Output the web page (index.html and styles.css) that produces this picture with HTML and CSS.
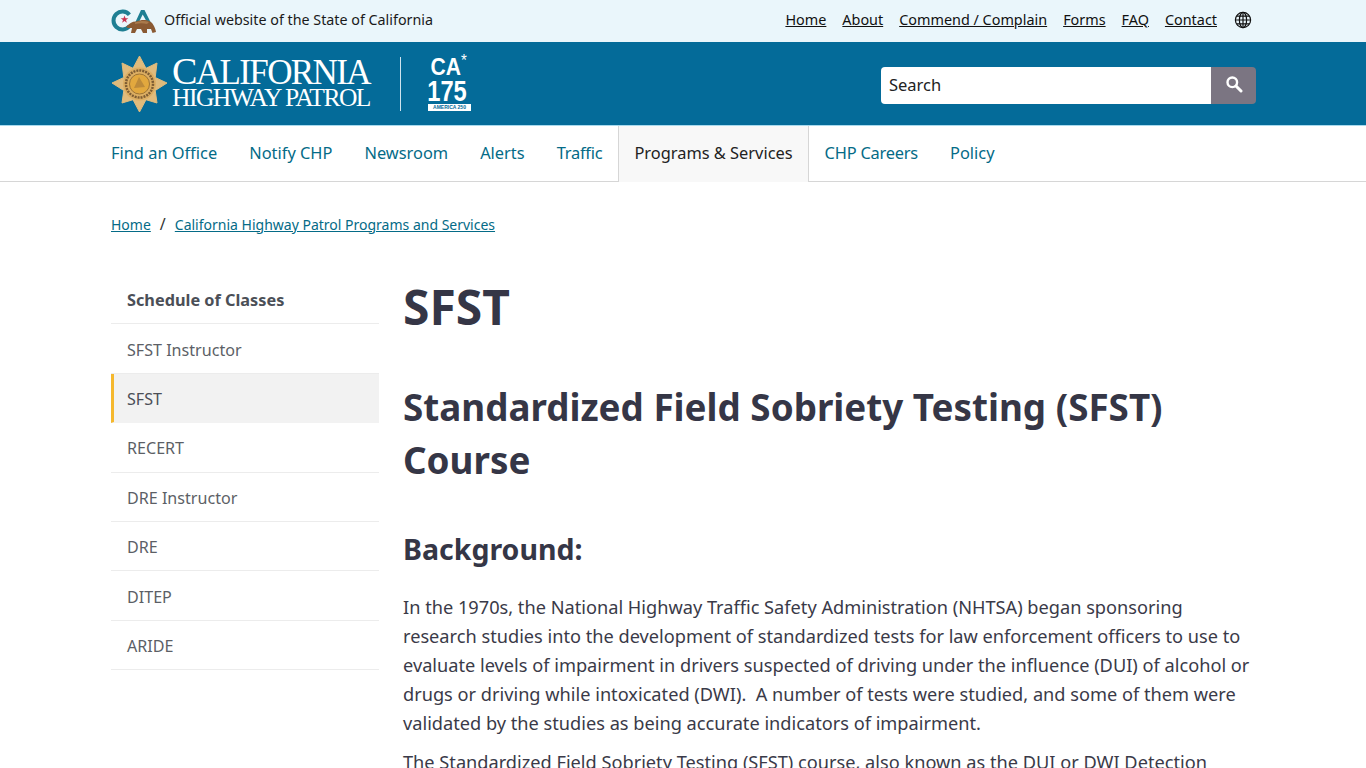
FILE: index.html
```html
<!DOCTYPE html>
<html lang="en">
<head>
<meta charset="utf-8">
<title>SFST - California Highway Patrol</title>
<link rel="stylesheet" href="styles.css">
</head>
<body>
<div class="topbar">
  <div class="container topbar-inner">
    <div class="official">
      <svg class="ca-logo" width="46" height="28" viewBox="0 0 46 28" aria-hidden="true">
        <path d="M18.400 7.700A9 9 0 1 0 18.400 19.300" fill="none" stroke="#1f7f93" stroke-width="4"/>
        <polygon points="13.500,8.500 14.500,11.200 17.300,11.200 15,13 15.900,15.700 13.500,14 11.100,15.700 12,13 9.700,11.200 12.500,11.200" fill="#c8324e"/>
        <path d="M24 16 L30 3 L33.500 3 L40 16 L36.500 16 L31.700 7.500 L27.500 16Z" fill="#1f7f93"/>
        <path d="M15 20 C18 16.500 21 14.500 25 14.500 C30 12.500 35 12.500 38 14 C41 15 44 19 45 25 L41.500 26 L40 22 L36 22 L36 26 L32 26 L30 22 L26 22 L24 26 L20 26 L21 21 L17 21Z" fill="#8a5a33"/>
        <path d="M24 15.500 C30 13.500 34 13.500 38 15 L36 17 C32 15.800 28 16 24 17Z" fill="#a97a4c"/>
      </svg>
      <span class="official-text">Official website of the State of California</span>
    </div>
    <nav class="utility">
      <a href="#">Home</a>
      <a href="#">About</a>
      <a href="#">Commend / Complain</a>
      <a href="#">Forms</a>
      <a href="#">FAQ</a>
      <a href="#">Contact</a>
      <svg class="globe" width="18" height="18" viewBox="0 0 18 18" aria-hidden="true">
        <g fill="none" stroke="#111" stroke-width="1.200">
          <circle cx="9" cy="9" r="7.600"/>
          <ellipse cx="9" cy="9" rx="3.600" ry="7.600"/>
          <path d="M9 1.400V16.600M1.400 9H16.600M2.500 5.200H15.500M2.500 12.800H15.500"/>
        </g>
      </svg>
    </nav>
  </div>
</div>
<header class="masthead">
  <div class="container masthead-inner">
    <div class="brand">
      <svg class="badge" width="57" height="56" viewBox="0 0 57 56" aria-hidden="true">
        <polygon points="28.500,0 35,12.300 46,7 44.200,21.500 56,27 44.200,34.500 46,47 35,43.700 28.500,56 22,43.700 11,47 12.800,34.500 1,27 12.800,21.500 11,7 22,12.300" fill="#e0bb7c" stroke="#e0bb7c" stroke-width="1" stroke-linejoin="round"/>
        <circle cx="28.500" cy="28" r="16.500" fill="#dcae62"/>
        <circle cx="28.500" cy="28" r="13.500" fill="none" stroke="#7d5c33" stroke-width="2.500" stroke-dasharray="2 1"/>
        <circle cx="28.500" cy="28" r="10" fill="#e2a83e" stroke="#9d7436" stroke-width="1"/>
        <path d="M23 32 L28 21 L34 31Z" fill="#bc8a3a"/>
      </svg>
      <div class="wordmark">
        <span class="wm-top">California</span>
        <span class="wm-bottom">Highway Patrol</span>
      </div>
      <div class="brand-rule"></div>
      <div class="ca175">
        <span class="ca175-ca">CA<sup>*</sup></span>
        <span class="ca175-num">175</span>
        <span class="ca175-tag">AMERICA 250</span>
      </div>
    </div>
    <form class="search">
      <div class="search-input">Search</div>
      <button class="search-btn" type="button" aria-label="Search">
        <svg width="18" height="18" viewBox="0 0 18 18" aria-hidden="true">
          <circle cx="7.300" cy="7.300" r="4.800" fill="none" stroke="#fff" stroke-width="2.400"/>
          <path d="M11 11L16 16" stroke="#fff" stroke-width="3" stroke-linecap="round"/>
        </svg>
      </button>
    </form>
  </div>
</header>
<nav class="mainnav">
  <div class="container mainnav-inner">
    <a href="#">Find an Office</a>
    <a href="#">Notify CHP</a>
    <a href="#">Newsroom</a>
    <a href="#">Alerts</a>
    <a href="#" class="tight">Traffic</a>
    <a href="#" class="current">Programs &amp; Services</a>
    <a href="#" class="tight">CHP Careers</a>
    <a href="#">Policy</a>
  </div>
</nav>
<div class="container breadcrumb">
  <a href="#">Home</a><span class="sep">/</span><a href="#">California Highway Patrol Programs and Services</a>
</div>
<div class="container layout">
  <aside class="sidenav">
    <a href="#" class="head">Schedule of Classes</a>
    <a href="#">SFST Instructor</a>
    <a href="#" class="active">SFST</a>
    <a href="#">RECERT</a>
    <a href="#">DRE Instructor</a>
    <a href="#">DRE</a>
    <a href="#">DITEP</a>
    <a href="#">ARIDE</a>
  </aside>
  <main class="content">
    <h1>SFST</h1>
    <h2>Standardized Field Sobriety Testing (SFST) Course</h2>
    <h3>Background:</h3>
    <p>In the 1970s, the National Highway Traffic Safety Administration (NHTSA) began sponsoring research studies into the development of standardized tests for law enforcement officers to use to evaluate levels of impairment in drivers suspected of driving under the influence (DUI) of alcohol or drugs or driving while intoxicated (DWI).&nbsp; A number of tests were studied, and some of them were validated by the studies as being accurate indicators of impairment.</p>
    <p>The Standardized Field Sobriety Testing (SFST) course, also known as the DUI or DWI Detection</p>
  </main>
</div>
</body>
</html>
```
FILE: styles.css
```css
* { box-sizing: border-box; }
html, body { margin: 0; padding: 0; height: 768px; overflow: hidden; }
body { font-family: "Noto Sans", "Open Sans", sans-serif; color: #3a3a48; background: #fff; }
.container { width: 1144px; margin-left: 111px; }

.topbar { height: 42px; background: #eaf6fb; }
.topbar-inner { height: 42px; display: flex; align-items: center; justify-content: space-between; }
.official { display: flex; align-items: center; gap: 7px; font-size: 14.300px; color: #1a1a1a; }
.official-text { padding-bottom: 4px; }
.ca-logo { display: block; }
.utility { display: flex; align-items: center; gap: 16px; font-size: 14.400px; padding-bottom: 2px; margin-right: 1px; }
.utility a { color: #111; padding-bottom: 2px; }
.globe { display: block; margin-right: 2px; margin-left: 1px; }

.masthead { height: 83px; background: #046b99; }
.masthead-inner { height: 83px; display: flex; align-items: center; justify-content: space-between; }
.brand { display: flex; align-items: center; color: #fff; }
.badge { display: block; margin-right: 4px; }
.wordmark { display: flex; flex-direction: column; font-family: "Liberation Serif", serif; text-transform: uppercase; width: 198px; white-space: nowrap; padding-bottom: 2px; }
.wm-top { font-size: 35px; letter-spacing: -1.600px; line-height: 29px; }
.wm-top::first-letter { font-size: 38px; }
.wm-bottom { font-size: 25.500px; letter-spacing: -1.500px; line-height: 22px; }
.brand-rule { width: 1px; height: 54px; background: #cfe3ee; margin: 0 26px 0 30px; }
.ca175 { display: flex; flex-direction: column; align-items: center; width: 45px; font-family: "Liberation Sans", sans-serif; font-weight: 700; }
.ca175-ca { font-size: 24px; line-height: 22px; transform: scaleX(0.88); margin-right: 2px; }
.ca175-ca sup { font-size: 17px; line-height: 0; font-weight: 400; }
.ca175-num { font-size: 30px; line-height: 25px; transform: scaleX(0.79); margin-right: 4px; }
.ca175-tag { font-size: 5px; line-height: 7px; background: #fff; color: #046b99; padding: 0 5px; margin-top: 1px; white-space: nowrap; }

.search { display: flex; width: 375px; height: 37px; margin-top: 3px; margin-right: -1px; }
.search-input { flex: 1; background: #fff; border-radius: 4px 0 0 4px; font-size: 16.500px; line-height: 36px; padding-left: 8px; color: #222; }
.search-btn { width: 45px; border: 0; background: #7b7582; border-radius: 0 4px 4px 0; display: flex; align-items: center; justify-content: center; padding: 0 0 2px; }

.mainnav { height: 57px; border-top: 1px solid #a8daee; border-bottom: 1px solid #d6d6d6; }
.mainnav-inner { display: flex; height: 55px; }
.mainnav a { display: flex; align-items: center; padding: 0 16px 2px; font-size: 16.400px; color: #046b87; text-decoration: none; }
.mainnav a:first-child { padding-left: 0; }
.mainnav a.tight { letter-spacing: -0.220px; }
.mainnav a.current { color: #222; background: #f8f8f8; border-left: 1px solid #d6d6d6; border-right: 1px solid #d6d6d6; padding: 0 15px 3px; height: 56px; }

.breadcrumb { display: flex; align-items: center; margin-top: 32px; height: 20px; font-size: 14px; }
.breadcrumb a { color: #046b87; }
.sep { margin: 0 9px; color: #333; font-size: 16px; }

.layout { display: flex; gap: 24px; margin-top: 41px; align-items: flex-start; }
.sidenav { width: 268px; flex: none; display: flex; flex-direction: column; }
.sidenav a { height: 49.400px; display: flex; align-items: center; padding: 2px 16px 0; font-size: 16.100px; color: #5c5f66; text-decoration: none; border-bottom: 1px solid #ececec; }
.sidenav a.head { font-weight: 700; color: #4b4f57; font-size: 16.300px; }
.sidenav a.active { background: #f2f2f2; border-left: 3px solid #f5b82e; padding-left: 13px; border-bottom-color: #f2f2f2; color: #4b4f57; }

.content { flex: 1; min-width: 0; padding-top: 5px; }
h1 { margin: 0; font-size: 48px; line-height: 54px; font-weight: 700; color: #353646; }
h2 { margin: 47px 0 0; font-size: 36.800px; line-height: 53px; font-weight: 700; color: #353646; }
h3 { margin: 42px 0 0; font-size: 28.500px; line-height: 40px; font-weight: 700; color: #353646; }
p { margin: 0 0 10px; font-size: 18.200px; line-height: 29px; color: #3a3a48; }
h3 + p { margin-top: 24px; }
```
